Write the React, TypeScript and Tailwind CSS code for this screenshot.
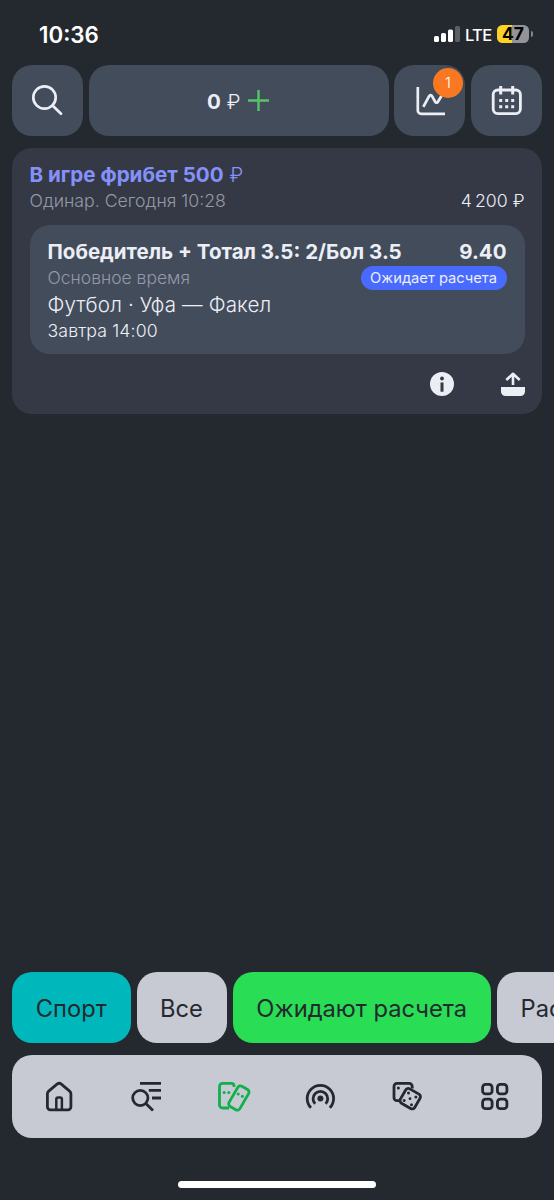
import type { ReactNode } from "react";

function StatusBar() {
  return (
    <div className="flex h-[65px] items-start justify-between pt-[20px] pl-[39px] pr-[21.500px] text-white">
      <div className="pt-px text-[22.300px] font-semibold leading-[28px]">10:36</div>
      <div className="flex h-[28px] items-center">
        <svg width="26" height="18" viewBox="0 0 26 18" className="mr-[5px]" fill="white">
          <rect x="0" y="11" width="5" height="6" rx="1.6" />
          <rect x="7" y="8" width="5" height="9" rx="1.6" />
          <rect x="14" y="4.500" width="5" height="12.500" rx="1.600" />
          <rect x="21" y="1" width="5" height="16" rx="1.6" fillOpacity="0.26" />
        </svg>
        <span className="mr-[5px] w-[27px] pt-px text-[16.500px] font-medium leading-[28px] tracking-[-0.700px]">LTE</span>
        <div className="flex h-[18px] w-[32px] items-center justify-center rounded-[5.500px] bg-linear-to-r from-[#fdd426] from-48% to-[#939398] to-48% text-[17.500px] font-bold leading-none text-black">
          47
        </div>
        <div className="ml-[1.500px] h-[6px] w-[2px] rounded-r-full bg-[#85868a]" />
      </div>
    </div>
  );
}

function SearchIcon() {
  return (
    <svg className="size-[71px]" viewBox="0 0 71 71" fill="none" stroke="#eceef6" strokeWidth="2.7">
      <circle cx="32.500" cy="32.500" r="11.200" />
      <path d="M40.500 40.500 49 48.800" strokeLinecap="round" />
    </svg>
  );
}

function ChartIcon() {
  return (
    <svg className="size-[71px]" viewBox="0 0 71 71" fill="none" stroke="#eceef6" strokeWidth="2.7">
      <path d="M23.800 22v23.500a3.300 3.300 0 0 0 3.300 3.300H51" />
      <path d="M29.300 41.900 35 31.300c.9-1.700 2.300-1.700 3.200 0l2.800 5.200c.9 1.600 2.200 1.600 3.100 0l4.700-7.700" />
    </svg>
  );
}

function CalendarIcon() {
  return (
    <svg className="size-[71px]" viewBox="0 0 71 71" fill="none" stroke="#eceef6" strokeWidth="2.8">
      <rect x="22.200" y="25" width="27.200" height="23.600" rx="4.500" />
      <path d="M29.700 21v8.500M41.700 21v8.500" strokeWidth="3" />
      <path d="M28.200 35.500h15.500M28.200 41.700h15.500" strokeWidth="3" strokeDasharray="3 3" />
    </svg>
  );
}

function TopBar() {
  const tile = "relative h-[71px] shrink-0 rounded-[20px] bg-[#434c5a]";
  return (
    <div className="flex justify-between px-[12px]">
      <button className={`${tile} w-[71px]`}><SearchIcon /></button>
      <button className={`${tile} flex w-[300px] items-center justify-center pr-[1px] text-[20.500px] text-[#eceef6]`}>
        <span className="pt-[3px] font-bold">0</span>
        <span className="ml-[6px] pt-[3px] font-light">₽</span>
        <svg className="ml-[8px] size-[21px]" viewBox="0 0 21 21" stroke="#55c568" strokeWidth="2.4">
          <path d="M10.500 0v21M0 10.500h21" />
        </svg>
      </button>
      <button className={`${tile} w-[71px]`}>
        <ChartIcon />
        <span className="absolute top-[3px] right-[2.500px] flex size-[29.500px] items-center justify-center rounded-full bg-[#f97821] pt-px text-[15px] font-light text-white">1</span>
      </button>
      <button className={`${tile} w-[71px]`}><CalendarIcon /></button>
    </div>
  );
}

function BetCard() {
  return (
    <section className="mx-[12px] mt-[12px] h-[265.500px] rounded-[20px] bg-[#343945] px-[17.500px] pt-[13px] text-[#eceef6]">
      <h2 className="pt-px text-[20.600px] font-bold leading-[26px] text-[#8591fb]">
        В игре фрибет 500 <span className="ml-[1px] font-light">₽</span>
      </h2>
      <div className="flex justify-between text-[17.700px] font-light leading-[26px]">
        <span className="text-[#9499a8]">Одинар. Сегодня 10:28</span>
        <span>4&#8201;200 ₽</span>
      </div>
      <div className="mt-[11px] h-[129px] rounded-[20px] bg-[#434c5a] px-[18px] pt-[13px]">
        <div className="flex justify-between pt-px text-[20.500px] font-bold leading-[26px]">
          <span>Победитель + Тотал 3.5: 2/Бол 3.5</span>
          <span>9.40</span>
        </div>
        <div className="flex h-[26px] items-center justify-between">
          <span className="text-[17.500px] font-light leading-[26px] text-[#9499a8]">Основное время</span>
          <span className="flex h-[24px] w-[146px] items-center justify-center rounded-full bg-[#486aff] text-[14.700px] whitespace-nowrap">Ожидает расчета</span>
        </div>
        <div className="pt-px text-[20.600px] font-light leading-[26px] tracking-[0.130px]">Футбол · Уфа — Факел</div>
        <div className="text-[17.700px] font-light leading-[26px] tracking-[0.120px]">Завтра 14:00</div>
      </div>
      <div className="mt-[17.500px] flex justify-end gap-[47px]">
        <svg className="size-[24px]" viewBox="0 0 24 24">
          <circle cx="12" cy="12" r="12" fill="#eceef6" />
          <circle cx="12" cy="6.500" r="1.900" fill="#343945" />
          <path d="M12 10.500v9.200" stroke="#343945" strokeWidth="3" />
        </svg>
        <svg className="size-[24px]" viewBox="0 0 24 24" fill="none" stroke="#eceef6" strokeWidth="2.6">
          <path d="M12 13V2M5.300 8 12 1.800 18.700 8" strokeLinejoin="round" />
          <path d="M0 15h24v4.500a4.500 4.500 0 0 1-4.500 4.500h-15A4.500 4.500 0 0 1 0 19.500z" fill="#eceef6" stroke="none" />
        </svg>
      </div>
    </section>
  );
}

function Filters() {
  const chip = "flex h-[71px] shrink-0 items-center rounded-[20px] pt-[2px] text-[23.700px] text-[#24292f]";
  return (
    <div className="flex gap-[6px] overflow-hidden pl-[12px] whitespace-nowrap">
      <button className={`${chip} w-[118.500px] justify-center bg-[#00b8bb]`}>Спорт</button>
      <button className={`${chip} w-[90px] justify-center bg-[#c7cad3]`}>Все</button>
      <button className={`${chip} w-[258.500px] justify-center bg-[#29dd55]`}>Ожидают расчета</button>
      <button className={`${chip} bg-[#c7cad3] px-[23.500px]`}>Расчитаны</button>
    </div>
  );
}

function NavIcon({ children, active = false }: { children: ReactNode; active?: boolean }) {
  return (
    <button className={active ? "text-[#10b04a]" : "text-[#24292f]"}>
      <svg className="size-[36px]" viewBox="0 0 36 36" fill="none" stroke="currentColor" strokeWidth="2.8">
        {children}
      </svg>
    </button>
  );
}

function NavBar() {
  return (
    <nav className="mx-[12px] mt-[12px] flex h-[83px] items-start justify-between rounded-[20px] bg-[#c7cad3] pt-[24px] pr-[29.500px] pl-[29px]">
      <NavIcon>
        <path d="M6.400 14.800c0-1 .5-2 1.300-2.700l8.300-7c1.400-1 3-1 4.300 0l8.300 7c.8.700 1.300 1.700 1.300 2.700v13a3 3 0 0 1-3 3H9.400a3 3 0 0 1-3-3z" />
        <path d="M15.300 30.500V20.300a1.800 1.800 0 0 1 1.800-1.800h2a1.800 1.800 0 0 1 1.800 1.800v10.200" strokeWidth="2.5" />
      </NavIcon>
      <NavIcon>
        <circle cx="12.300" cy="19" r="7.600" />
        <path d="m17.800 24.500 7.200 7.100M12 4.400h21M20.800 11.400H33M24 19h9" />
      </NavIcon>
      <NavIcon active>
        <path d="M14 29H7.500a3 3 0 0 1-3-3V7.400a3 3 0 0 1 3-3h9a2.500 2.500 0 0 1 2.500 2.500v1" />
        <rect x="17.600" y="7.300" width="12.500" height="23.400" rx="3" transform="rotate(30 23.850 19)" />
        <g fill="currentColor" stroke="none">
          <circle cx="9.200" cy="13.400" r="1.500" />
          <circle cx="13.800" cy="13.400" r="1.500" />
          <circle cx="23.200" cy="15" r="1.500" />
          <circle cx="27.400" cy="17.300" r="1.500" />
        </g>
      </NavIcon>
      <NavIcon>
        <circle cx="18.400" cy="19.500" r="3" fill="currentColor" stroke="none" />
        <path d="M13.200 24.800a7.300 7.300 0 1 1 10.400 0M9 28.800a13.200 13.200 0 1 1 18.800 0" />
      </NavIcon>
      <NavIcon>
        <path d="M12 21.700H8a3 3 0 0 1-3-3V7.400a3 3 0 0 1 3-3h12.200a3 3 0 0 1 3 3v2.200" />
        <rect x="12.900" y="11.400" width="16.600" height="16.600" rx="3" transform="rotate(30 21.200 19.700)" />
        <g fill="currentColor" stroke="none">
          <circle cx="9.400" cy="8.900" r="1.500" />
          <circle cx="19.500" cy="13.900" r="1.500" />
          <circle cx="26.900" cy="18.100" r="1.500" />
          <circle cx="21" cy="19.700" r="1.400" />
          <circle cx="15.100" cy="21.500" r="1.500" />
          <circle cx="22.500" cy="25.800" r="1.500" />
        </g>
      </NavIcon>
      <NavIcon>
        <rect x="6.600" y="5.400" width="9.500" height="9.500" rx="3" />
        <rect x="21.400" y="5.400" width="9.500" height="9.500" rx="3" />
        <rect x="6.600" y="20.200" width="9.500" height="9.500" rx="3" />
        <rect x="21.400" y="20.200" width="9.500" height="9.500" rx="3" />
      </NavIcon>
    </nav>
  );
}

export default function App() {
  return (
    <main className="flex h-[1200px] w-[554px] flex-col overflow-hidden bg-[#24292f] font-['Inter',sans-serif]">
      <StatusBar />
      <TopBar />
      <BetCard />
      <div className="flex-1" />
      <Filters />
      <NavBar />
      <div className="mx-auto mt-[43px] mb-[12px] h-[7px] w-[198px] shrink-0 rounded-full bg-white" />
    </main>
  );
}
